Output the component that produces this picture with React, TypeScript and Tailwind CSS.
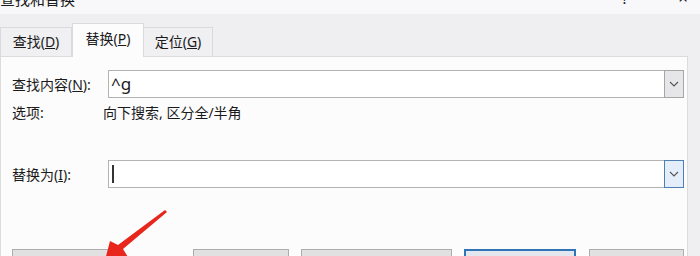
import React from "react";

const font = { fontFamily: '"Noto Sans", "Noto Sans CJK SC", sans-serif' } as React.CSSProperties;

function Chevron() {
  return (
    <svg width="10" height="6" viewBox="0 0 10 6">
      <path d="M1 1 L5 5 L9 1" fill="none" stroke="#555" strokeWidth="1.1" />
    </svg>
  );
}

function Combo({ text, active, cursor }: { text?: string; active?: boolean; cursor?: boolean }) {
  return (
    <div className="flex-1 h-[28px] flex border border-[#b3b3b3] bg-white">
      <div className="flex-1 flex items-center pl-[2px] text-[17px] text-[#1a1a1a]">
        {cursor ? <div className="w-[2px] h-[18px] bg-[#333] ml-[1px]" /> : <span>{text}</span>}
      </div>
      <div
        className={
          active
            ? "w-[20px] -my-px -mr-px flex items-center justify-center border border-[#4c7fb4] bg-[#e3eefa]"
            : "w-[20px] -my-px -mr-px flex items-center justify-center border border-[#a6a6a6] bg-[#e6e6e8]"
        }
      >
        <Chevron />
      </div>
    </div>
  );
}

export default function App() {
  return (
    <div className="w-[700px] h-[256px] overflow-hidden bg-[#efeff2] flex flex-col relative text-[#1a1a1a]" style={font}>
      <div className="shrink-0 h-[14px] bg-[#f8f8fa] flex overflow-hidden">
        <div className="-mt-[11px] leading-[20px] text-[15px] pl-0">查找和替换</div>
        <div className="flex-1" />
        <div className="-mt-[12px] leading-[20px] text-[15px] mr-[50px]">?</div>
        <div className="-mt-[12px] leading-[20px] text-[17px] mr-[12px]">×</div>
      </div>
      <div className="shrink-0 h-[42px] flex items-end text-[14px]">
        <div className="w-[72px] h-[29px] flex items-center justify-center border border-b-0 border-[#dadadd] bg-[#f0f0f2] pb-[1px]">
          查找(<u>D</u>)
        </div>
        <div className="w-[72px] h-[34px] -mb-px relative z-10 flex items-center justify-center border border-b-0 border-[#dadadd] bg-[#fcfcfd] pb-[4px]">
          替换(<u>P</u>)
        </div>
        <div className="w-[69px] h-[29px] flex items-center justify-center border border-b-0 border-l-0 border-[#dadadd] bg-[#f0f0f2] pb-[1px]">
          定位(<u>G</u>)
        </div>
      </div>
      <div className="shrink-0 h-[240px] mr-[12px] bg-[#fcfcfd] border border-[#dcdcdf] flex flex-col pl-[11px] pr-[3px] text-[14px]">
        <div className="shrink-0 mt-[13px] h-[28px] flex items-center">
          <div className="w-[96px]">查找内容(<u>N</u>):</div>
          <Combo text="^g" />
        </div>
        <div className="shrink-0 mt-[6px] h-[16px] flex items-center">
          <div className="w-[91px]">选项:</div>
          <div>向下搜索, 区分全/半角</div>
        </div>
        <div className="shrink-0 mt-[40px] h-[28px] flex items-center">
          <div className="w-[96px]">替换为(<u>I</u>):</div>
          <Combo active cursor />
        </div>
        <div className="shrink-0 mt-[61px] h-[28px] flex">
          <div className="w-[98px] h-[28px] border border-[#adadad] bg-[#e1e1e1]" />
          <div className="ml-[83px] w-[96px] h-[28px] border border-[#adadad] bg-[#e1e1e1]" />
          <div className="ml-[12px] w-[151px] h-[28px] border border-[#adadad] bg-[#e1e1e1]" />
          <div className="ml-[12px] w-[112px] h-[28px] border-2 border-[#2f75b8] bg-[#e4e8ee]" />
          <div className="ml-[13px] w-[95px] h-[28px] border border-[#adadad] bg-[#e1e1e1]" />
        </div>
      </div>
      <svg className="absolute left-[95px] top-[205px]" width="80" height="51" viewBox="0 0 80 51">
        <polygon
          points="70,5 72,7 28,44 33,52 9,59 15,36 23,40"
          fill="#e8261c"
        />
      </svg>
    </div>
  );
}
